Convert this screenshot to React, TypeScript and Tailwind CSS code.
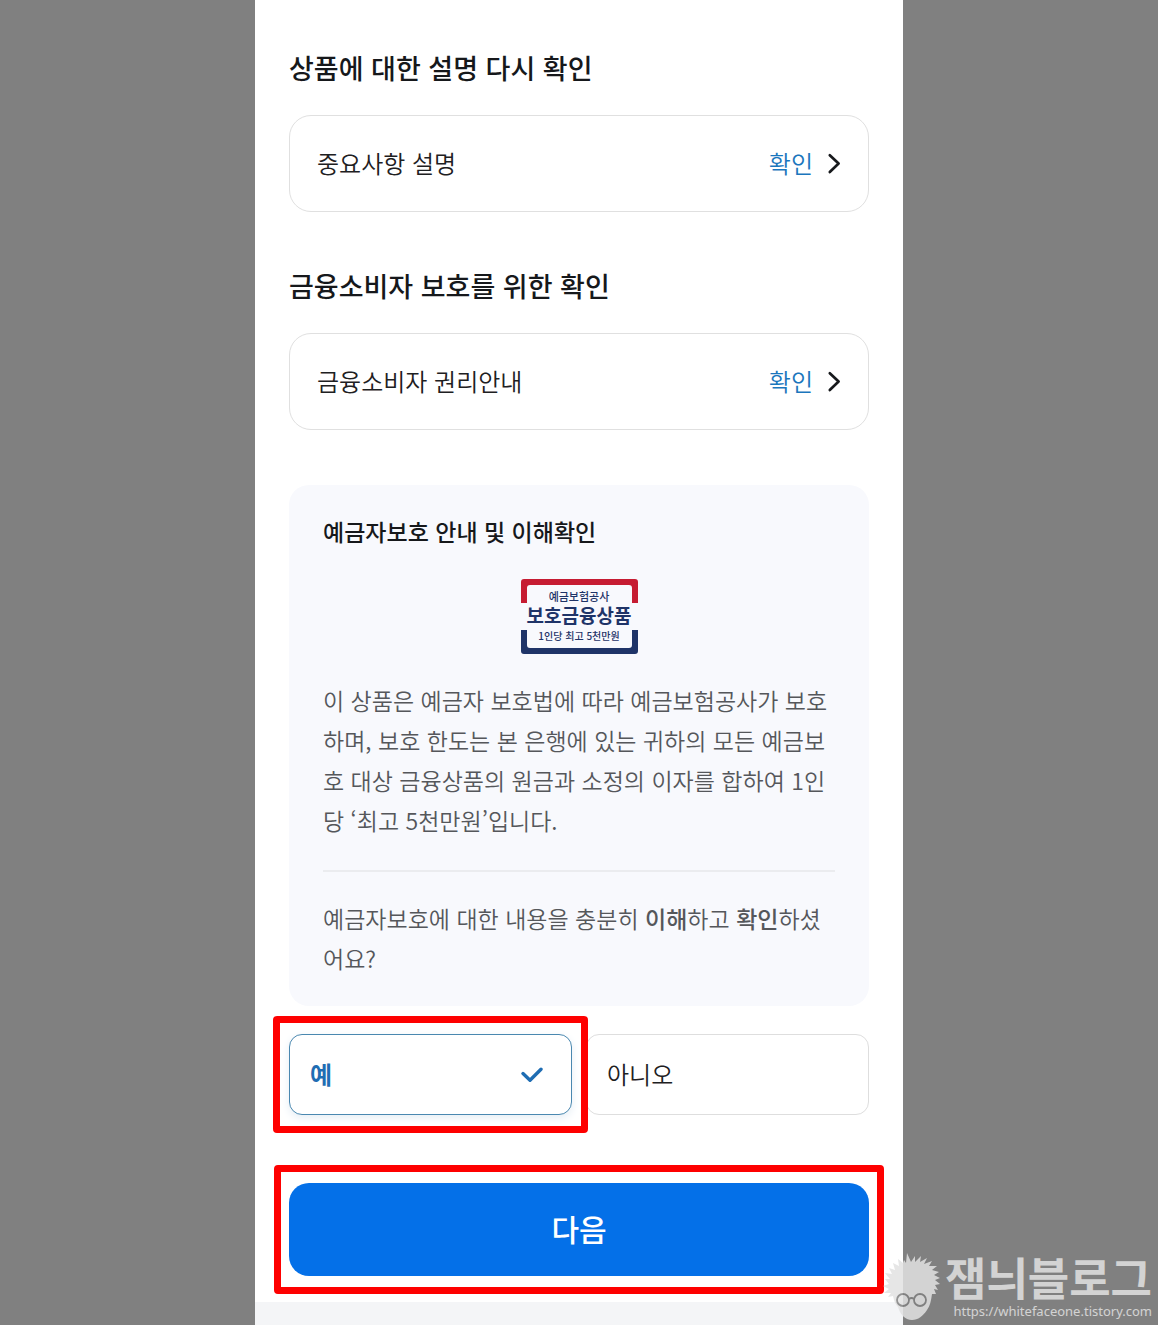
import { useState } from 'react';

interface ConfirmSectionProps {
  title: string;
  label: string;
}

const ConfirmSection = ({ title, label }: ConfirmSectionProps) => (
  <section className="mb-[55px]">
    <h2 className="mb-7 text-[27px] leading-[38px] font-medium text-[#16181b]">{title}</h2>
    <button
      type="button"
      className="flex h-[97px] w-full items-center justify-between rounded-[22px] border border-[#e0e0e0] px-[27px] pb-0.5 text-2xl font-[350] text-[#1e2022]"
    >
      {label}
      <span className="flex items-center gap-3.5 text-[#1b76bd]">
        확인
        <svg width="14" height="22" viewBox="0 0 14 22" fill="none" aria-hidden="true">
          <path d="M2.8 3.2 L11.6 11.6 L2.8 20" stroke="#17191c" strokeWidth="2.7" strokeLinecap="round" strokeLinejoin="round" />
        </svg>
      </span>
    </button>
  </section>
);

// Deposit insurance mark
const InsuranceMark = () => (
  <svg width="117" height="75" viewBox="0 0 117 75" className="mx-auto" role="img" aria-label="예금보험공사 보호금융상품">
    <path d="M0 24 V3 Q0 0 3 0 H114 Q117 0 117 3 V24 H111 V9 Q111 6 108 6 H9 Q6 6 6 9 V24 Z" fill="#c61c32" />
    <path d="M0 51 V72 Q0 75 3 75 H114 Q117 75 117 72 V51 H111 V66 Q111 69 108 69 H9 Q6 69 6 66 V51 Z" fill="#1f3468" />
    <g fill="#1f3468" textAnchor="middle">
      <text x="58" y="22" fontSize="11" fontWeight="500">예금보험공사</text>
      <text x="58" y="44" fontSize="19" fontWeight="700">보호금융상품</text>
      <text x="58" y="61" fontSize="10" fontWeight="500">1인당 최고 5천만원</text>
    </g>
  </svg>
);

const Highlight = ({ className }: { className: string }) => (
  <span aria-hidden="true" className={`pointer-events-none absolute z-10 rounded-[4px] border-[7px] border-[#fe0000] ${className}`} />
);

interface AnswerOptionProps {
  label: string;
  value: string;
  checked: boolean;
  onSelect: (value: string) => void;
}

const AnswerOption = ({ label, value, checked, onSelect }: AnswerOptionProps) => (
  <label
    className={`flex h-[81px] cursor-pointer items-center justify-between rounded-[13px] border bg-white px-5 pb-0.5 text-2xl ${
      checked ? 'border-[#4a88b0] font-bold text-[#1f6db3] shadow-[0_3px_8px_#e6eef5]' : 'border-[#dedede] font-[350] text-[#1e2022]'
    }`}
  >
    <input
      type="radio"
      name="understood"
      value={value}
      checked={checked}
      onChange={() => onSelect(value)}
      className="sr-only"
    />
    {label}
    {checked && (
      <svg width="22" height="16" viewBox="0 0 22 16" fill="none" className="mr-2" aria-hidden="true">
        <path d="M2 7.6 L9 14.2 L20 3.2" stroke="#1f6db3" strokeWidth="3.4" strokeLinecap="round" strokeLinejoin="round" />
      </svg>
    )}
  </label>
);

const Watermark = () => (
  <div className="absolute right-1.5 bottom-1 z-20 flex items-end gap-1 text-[#e2e2e2] opacity-85">
    <svg width="58" height="68" viewBox="0 0 58 68" aria-hidden="true">
      <path
        d="M15 54 C12 51 11 47 10 43 L5 44 L8 40 L1 40 L6 36 L0 33 L6 31 L2 26 L7 26 L2 20 L9 21 L6 15 L12 17 L10 10 L16 13 L15 6 L20 10 L21 7 L23 10 L24 0 L28 9 L32 3 L32 9 L38 3 L37 9 L44 5 L41 11 L49 8 L46 13 L54 13 L49 17 L56 19 L51 22 L57 25 L52 27 L57 31 L52 32 L55 37 L51 36 L53 41 L49 41 C48 48 47 53 44 57 C40 63 35 67 29 67 C22 67 17 61 15 54 Z"
        fill="currentColor"
      />
      <g stroke="#808080" strokeWidth="1.8" fill="none">
        <circle cx="20" cy="47" r="6" />
        <circle cx="37" cy="47" r="6" />
        <path d="M26 46 Q28.500 44 31 46" />
      </g>
    </svg>
    <div className="text-right">
      <p className="text-[45px] leading-[48px] font-bold">잼늬블로그</p>
      <p className="font-['Noto_Sans'] text-[13px] leading-5">https://whitefaceone.tistory.com</p>
    </div>
  </div>
);

const App = () => {
  const [answer, setAnswer] = useState('yes');

  return (
    <div lang="ko" className="relative flex min-h-screen flex-col bg-[#808080] font-['Noto_Sans_CJK_KR',sans-serif]">
      <main className="mx-auto flex w-full max-w-[648px] grow flex-col bg-white">
        <div className="px-[34px] pt-[49px] pb-[26px]">
          <ConfirmSection title="상품에 대한 설명 다시 확인" label="중요사항 설명" />
          <ConfirmSection title="금융소비자 보호를 위한 확인" label="금융소비자 권리안내" />

          <section className="rounded-[20px] bg-[#f8f9fd] px-[34px] py-7 text-[23px] text-[#55575b]">
            <h3 className="mb-[30px] leading-9 font-medium text-[#16181b]">예금자보호 안내 및 이해확인</h3>
            <InsuranceMark />
            <p className="mt-[26px] leading-10 font-[350] break-all">
              이 상품은 예금자 보호법에 따라 예금보험공사가 보호하며, 보호 한도는 본 은행에 있는 귀하의 모든 예금보호 대상
              금융상품의 원금과 소정의 이자를 합하여 1인당 ‘최고 5천만원’입니다.
            </p>
            <hr className="mt-[30px] mb-[26px] border-t-2 border-[#ebecef]" />
            <p id="understood-question" className="leading-10 font-[350] break-all">
              예금자보호에 대한 내용을 충분히 <strong className="font-medium">이해</strong>하고{' '}
              <strong className="font-medium">확인</strong>하셨어요?
            </p>
          </section>

          <div role="radiogroup" aria-labelledby="understood-question" className="mt-7 grid grid-cols-2 gap-3.5">
            <div className="relative">
              <AnswerOption label="예" value="yes" checked={answer === 'yes'} onSelect={setAnswer} />
              <Highlight className="-inset-x-4 -inset-y-[18px]" />
            </div>
            <AnswerOption label="아니오" value="no" checked={answer === 'no'} onSelect={setAnswer} />
          </div>

          <div className="relative mt-[68px]">
            <button type="button" className="h-[93px] w-full rounded-[20px] bg-[#0470e8] pb-0.5 text-[30px] font-medium text-white">
              다음
            </button>
            <Highlight className="-inset-x-[15px] -inset-y-[18px]" />
          </div>
        </div>
        <div className="min-h-[23px] grow bg-[#f4f5f7]" />
      </main>
      <Watermark />
    </div>
  );
};

export default App;
